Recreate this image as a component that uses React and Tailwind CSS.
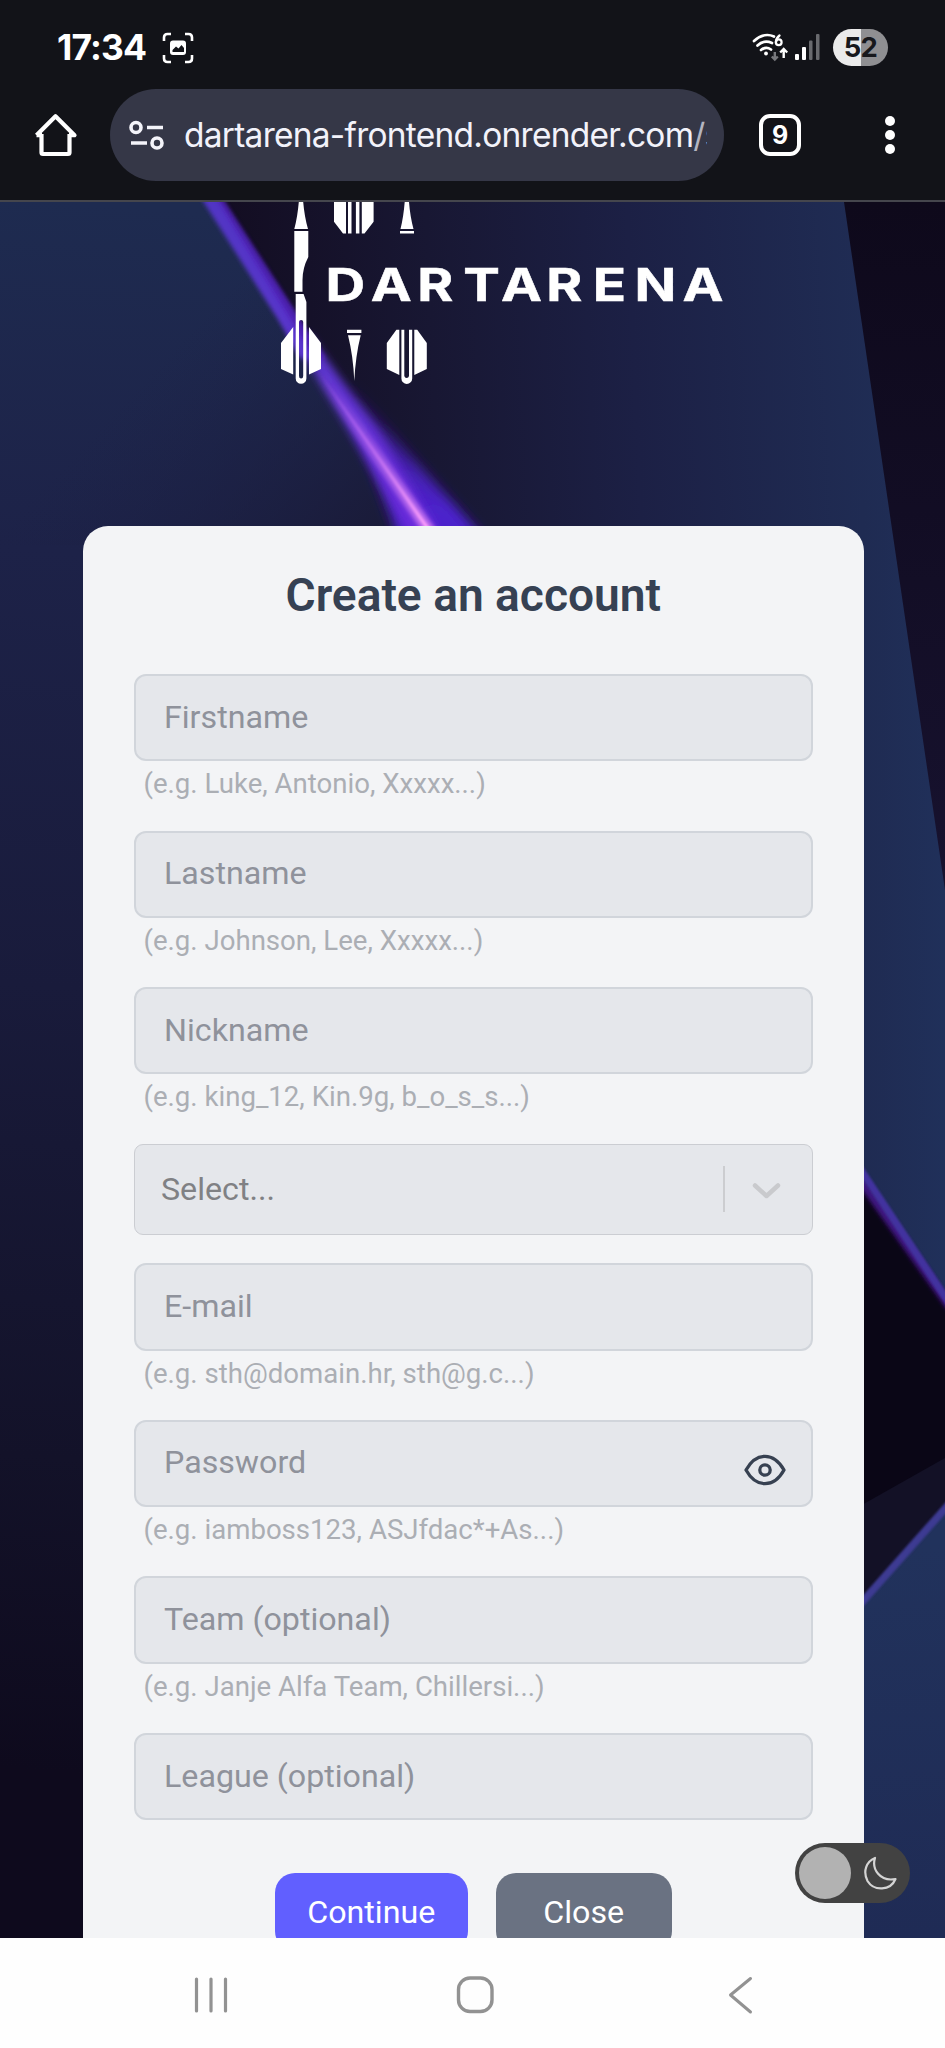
function StatusBar() {
  return (
    <div className="flex h-[89px] items-start pl-[57px] pr-[57px]">
      <span className="mt-[24px] font-['Inter'] text-[35.5px] leading-[48px] font-bold tracking-[-0.9px] text-white">17:34</span>
      <svg className="mt-[32px] ml-[16px]" width="32" height="32" viewBox="0 0 32 32" fill="none">
        <path d="M2 9V5.500Q2 2 5.500 2H9M23 2h3.500Q30 2 30 5.500V9M30 23v3.500Q30 30 26.500 30H23M9 30H5.500Q2 30 2 26.500V23" stroke="#fff" strokeWidth="2.600" />
        <rect x="8" y="8.500" width="16" height="14.500" rx="3" fill="#fff" />
        <path d="M10.500 20v-2l3.500-3.500 2.500 2 3-3.500 2.500 3V20z" fill="#121318" />
      </svg>
      <svg className="mt-[30px] ml-auto" width="38" height="34" viewBox="0 0 38 34" fill="none">
        <path d="M2 11Q12 2 22 6.500M5.500 15.500Q12 9.500 20 13M9 20Q14 16 19 19.500" stroke="#fff" strokeWidth="2.700" strokeLinecap="round" />
        <circle cx="14" cy="23.500" r="1.900" fill="#fff" />
        <path d="M27.500 5.500Q23.800 8.500 24 12.300" stroke="#fff" strokeWidth="2.300" strokeLinecap="round" />
        <circle cx="26.700" cy="12.300" r="2.900" stroke="#fff" strokeWidth="2.200" />
        <path d="M22.800 22v7M19.800 26.500l3 3 3-3" stroke="#77787c" strokeWidth="2.400" />
        <path d="M31.700 28v-9M28.200 22.500l3.500-3.500 3.500 3.500" stroke="#fff" strokeWidth="2.400" />
      </svg>
      <svg className="mt-[33px] ml-[5px]" width="26" height="28" viewBox="0 0 26 28">
        <rect x="0" y="21" width="4" height="6" rx="1" fill="#fff" />
        <rect x="7" y="14" width="4" height="13" rx="1" fill="#fff" />
        <rect x="14" y="7.500" width="3.500" height="19.500" rx="1" fill="#696a6e" />
        <rect x="21" y="1" width="3.500" height="26" rx="1" fill="#696a6e" />
      </svg>
      <div className="mt-[29px] ml-[12px] flex h-[37px] w-[55px] items-center justify-center rounded-full bg-linear-to-r from-[#ebebeb] from-[51%] to-[#8f8f92] to-[51%]">
        <span className="font-['Inter'] text-[27.5px] leading-none font-bold tracking-[-0.8px] text-[#17181c]">52</span>
      </div>
    </div>
  );
}

function Toolbar() {
  return (
    <div className="flex h-[111px] items-start">
      <svg className="mt-[23px] ml-[33px]" width="46" height="46" viewBox="0 0 46 46" fill="none" stroke="#fff" strokeWidth="4.200" strokeLinejoin="round">
        <path d="M8.500 22V40.500Q8.500 42 10 42H35Q36.500 42 36.500 40.500V22M3.500 23.200L22.500 4.200L41.500 23.200H36M9 23.200H3.500" />
      </svg>
      <div className="ml-[31px] flex h-[92px] w-[614px] items-center rounded-full bg-[#353747] pl-[18px]">
        <svg width="38" height="34" viewBox="0 0 38 34" fill="none" stroke="#f4f4fa" strokeWidth="3.600">
          <circle cx="8" cy="9.500" r="5" />
          <path d="M19 9.500h16M3 25h16" />
          <circle cx="29" cy="25" r="5" />
        </svg>
        <div className="ml-[18px] w-[523px] overflow-hidden font-['Inter'] text-[33.5px] leading-[46px] tracking-[-0.75px] whitespace-nowrap text-[#f2f2fa]">dartarena-frontend.onrender.com<span className="text-[#b4b5c0]">/s</span></div>
      </div>
      <div className="mt-[25px] ml-[35px] flex size-[42px] items-center justify-center rounded-[11px] border-[4.500px] border-white font-['Inter'] text-[25px] leading-none font-bold text-white">9</div>
      <div className="mt-[27px] ml-[84px] flex flex-col gap-[4px]">
        <i className="size-[10px] rounded-full bg-white" />
        <i className="size-[10px] rounded-full bg-white" />
        <i className="size-[10px] rounded-full bg-white" />
      </div>
    </div>
  );
}

function Backdrop() {
  return (
    <svg className="absolute inset-0" width="945" height="1736" viewBox="0 202 945 1736">
      <defs>
        <linearGradient id="left" gradientUnits="userSpaceOnUse" x1="60" y1="202" x2="-60" y2="1938">
          <stop offset="0" stopColor="#1e2b50" />
          <stop offset="0.200" stopColor="#1d2248" />
          <stop offset="0.450" stopColor="#191b3b" />
          <stop offset="0.720" stopColor="#131229" />
          <stop offset="0.900" stopColor="#0e0a1d" />
          <stop offset="1" stopColor="#0e0a1d" />
        </linearGradient>
        <linearGradient id="tint" gradientUnits="userSpaceOnUse" x1="180" y1="340" x2="380" y2="530">
          <stop offset="0" stopColor="#1c2146" stopOpacity="0" />
          <stop offset="1" stopColor="#1a1b39" />
        </linearGradient>
        <linearGradient id="mid" gradientUnits="userSpaceOnUse" x1="230" y1="330" x2="900" y2="300">
          <stop offset="0" stopColor="#130d22" />
          <stop offset="0.300" stopColor="#181733" />
          <stop offset="0.600" stopColor="#1c2045" />
          <stop offset="1" stopColor="#202e56" />
        </linearGradient>
        <linearGradient id="corner" gradientUnits="userSpaceOnUse" x1="0" y1="202" x2="0" y2="890">
          <stop offset="0" stopColor="#0e091b" />
          <stop offset="1" stopColor="#17122f" />
        </linearGradient>
        <linearGradient id="strip" gradientUnits="userSpaceOnUse" x1="864" y1="0" x2="945" y2="0">
          <stop offset="0" stopColor="#1f2b52" />
          <stop offset="1" stopColor="#20305a" />
        </linearGradient>
        <linearGradient id="low" gradientUnits="userSpaceOnUse" x1="880" y1="1550" x2="900" y2="1938">
          <stop offset="0" stopColor="#21325c" />
          <stop offset="1" stopColor="#1f2b55" />
        </linearGradient>
        <linearGradient id="beam" gradientUnits="userSpaceOnUse" x1="210" y1="202" x2="430" y2="526">
          <stop offset="0" stopColor="#5134c4" />
          <stop offset="0.500" stopColor="#5b35cc" />
          <stop offset="1" stopColor="#6a28dc" />
        </linearGradient>
        <linearGradient id="glow" gradientUnits="userSpaceOnUse" x1="340" y1="370" x2="430" y2="526">
          <stop offset="0" stopColor="#4a20b0" stopOpacity="0" />
          <stop offset="1" stopColor="#4c21cc" />
        </linearGradient>
        <linearGradient id="core" gradientUnits="userSpaceOnUse" x1="320" y1="370" x2="427" y2="526">
          <stop offset="0" stopColor="#a45cf0" stopOpacity="0" />
          <stop offset="0.500" stopColor="#b264ee" />
          <stop offset="1" stopColor="#fa9cfb" />
        </linearGradient>
        <filter id="b1" x="-20%" y="-20%" width="140%" height="140%"><feGaussianBlur stdDeviation="0.900" /></filter>
        <filter id="b2" x="-20%" y="-20%" width="140%" height="140%"><feGaussianBlur stdDeviation="2" /></filter>
        <filter id="b4" x="-20%" y="-20%" width="140%" height="140%"><feGaussianBlur stdDeviation="4" /></filter>
        <filter id="b8" x="-20%" y="-20%" width="140%" height="140%"><feGaussianBlur stdDeviation="7" /></filter>
      </defs>
      <rect x="0" y="202" width="945" height="1736" fill="url(#left)" />
      <path d="M0 202H210L440 545H0Z" fill="url(#tint)" />
      <path d="M210 202H945V560H449Z" fill="url(#mid)" />
      <path d="M340 385L500 560H412Z" fill="url(#glow)" filter="url(#b8)" />
      <path d="M342 375L484 545H404Z" fill="url(#glow)" filter="url(#b8)" />
      <path d="M196 190H216L325 360L300 358L277 318Z" fill="url(#beam)" filter="url(#b2)" />
      <path d="M290 332L310 336L378 430L455 560H424L345 424Z" fill="url(#beam)" filter="url(#b4)" />
      <path d="M212 190L222 198L325 358L316 360Z" fill="#4a17a8" opacity="0.700" filter="url(#b2)" />
      <path d="M318 371L440 546" stroke="url(#core)" strokeWidth="12" opacity="0.600" filter="url(#b2)" />
      <path d="M318 371L440 546" stroke="url(#core)" strokeWidth="3.500" filter="url(#b1)" />
      <path d="M860 500H945V1320H860Z" fill="url(#strip)" />
      <path d="M844 202H945V890Z" fill="url(#corner)" />
      <path d="M860 1180L945 1302V1520L860 1610Z" fill="#0a0616" />
      <path d="M860 1506L945 1458V1530L860 1620Z" fill="#131126" />
      <path d="M855 1173L950 1307" stroke="#401482" strokeWidth="8" filter="url(#b2)" />
      <path d="M855 1161L950 1304" stroke="#43339f" strokeWidth="7" filter="url(#b1)" />
      <path d="M855 1610L950 1503V1938H855Z" fill="url(#low)" />
      <path d="M855 1610L950 1503" stroke="#3c3b92" strokeWidth="7.500" filter="url(#b1)" />
    </svg>
  );
}

function Logo() {
  return (
    <svg className="block" width="460" height="190" viewBox="270 202 460 190" fill="#fff">
      <path d="M298.800 202h4.400Q304.500 217 308 229H294.300Q297.500 217 298.800 202Z" />
      <path d="M294.300 231H308.300V257Q302.500 268 302.500 280V291.700H294.300Z" />
      <path d="M295.700 294H303.600L306.400 302V378.500a5.350 5.350 0 0 1-10.700 0ZM299 322v54a2.100 2.500 0 0 0 4.200 0V322a2.100 2 0 0 0-4.200 0Z" fillRule="evenodd" />
      <path d="M293.200 327V374.500L281 369V343ZM309 327V374.500L321 369V343Z" />
      <path d="M334 202H346V233.500H343L334 221.700ZM373.600 202H361.800V233.500H364.500L373.600 221.700ZM348 202h3.500v31.500H348ZM355.900 202h3.500v31.500h-3.500Z" />
      <path d="M404.700 202h4.300Q410.200 217 413.500 229H400.500Q403.500 217 404.700 202ZM400 231h14v2.500h-14Z" />
      <path d="M347 329.700h14.400v3.200H347ZM348 335.300h12.700Q355.500 356 354.300 381Q353.200 356 348 335.300Z" />
      <path d="M396.400 329.700H399.300V375L386.800 369V343ZM417.200 329.700H414.300V375L426.800 369V343Z" />
      <path d="M401.400 329.700h2.900V376a2.400 2.500 0 0 0 4.700 0V329.700h3.200V378.500a5.400 5.400 0 0 1-10.800 0Z" />
      <text transform="scale(1.220 1)" x="266.900 304 342.100 379.700 410.600 447.800 485.900 520 559.400" y="301" fontFamily="Inter" fontWeight="700" fontSize="45" stroke="#fff" strokeWidth="0.500">DARTARENA</text>
    </svg>
  );
}

function Box({ label, children }) {
  return (
    <div className="flex h-[87.3px] items-center justify-between rounded-[12px] border-2 border-[#d1d5db] bg-[#e5e7eb] pr-[24px] pl-[28px] text-[32.2px] text-[#8f929b]">
      <span className="mb-[2px]">{label}</span>
      {children}
    </div>
  );
}

function Field({ label, hint, children }) {
  return (
    <div className="h-[156.6px]">
      <Box label={label}>{children}</Box>
      <p className="mt-[5px] pl-[9.500px] text-[27.6px] leading-[36px] text-[#abaeb4]">{hint}</p>
    </div>
  );
}

function EyeIcon() {
  return (
    <svg className="mt-[13px]" width="44" height="34" viewBox="0 0 44 34" fill="none" stroke="#374151" strokeWidth="3.300" strokeLinejoin="round">
      <path d="M3 17C8 8 14.500 3.300 22 3.300S36 8 41 17C36 26 29.500 30.700 22 30.700S8 26 3 17Z" />
      <circle cx="22" cy="17" r="5.200" />
    </svg>
  );
}

function SelectBox() {
  return (
    <div className="mb-[28.3px] flex h-[91.2px] items-center rounded-[9px] border-[1.500px] border-[#cbcdd2] bg-[#e5e7eb] pl-[26px] text-[32.2px] text-[#808184]">
      <span className="mb-[1px] grow">Select...</span>
      <i className="h-[46px] w-[2px] bg-[#cccdd0]" />
      <svg className="mt-[3px] mr-[31px] ml-[27px]" width="29" height="18" viewBox="0 0 29 18" fill="none" stroke="#c9cacd" strokeWidth="4.500" strokeLinecap="round" strokeLinejoin="round">
        <path d="M3 3.500L14.500 14L26 3.500" />
      </svg>
    </div>
  );
}

function Card() {
  return (
    <div className="ml-[83px] h-[1412px] w-[780.5px] overflow-hidden rounded-t-[25px] bg-[#f3f4f6] px-[51px] pt-[39px]">
      <h1 className="h-[109px] text-center text-[46.1px] leading-[60px] font-semibold text-[#364153]">Create an account</h1>
      <Field label="Firstname" hint="(e.g. Luke, Antonio, Xxxxx...)" />
      <Field label="Lastname" hint="(e.g. Johnson, Lee, Xxxxx...)" />
      <Field label="Nickname" hint="(e.g. king_12, Kin.9g, b_o_s_s...)" />
      <SelectBox />
      <Field label="E-mail" hint="(e.g. sth@domain.hr, sth@g.c...)" />
      <Field label="Password" hint="(e.g. iamboss123, ASJfdac*+As...)">
        <EyeIcon />
      </Field>
      <Field label="Team (optional)" hint="(e.g. Janje Alfa Team, Chillersi...)" />
      <Box label="League (optional)" />
      <div className="mt-[52.500px] flex justify-center gap-[28px] text-[32.2px] text-white">
        <button className="h-[78px] w-[193px] rounded-[20px] bg-[#615fff]">Continue</button>
        <button className="h-[78px] w-[176px] rounded-[20px] bg-[#6a7282]">Close</button>
      </div>
    </div>
  );
}

function ThemeToggle() {
  return (
    <div className="absolute right-[35px] bottom-[35px] flex h-[60px] w-[115px] items-center justify-between rounded-full bg-[#424242] pr-[13px] pl-[4px]">
      <i className="size-[51.500px] rounded-full bg-[#b2b2b2]" />
      <svg width="34" height="34" viewBox="0 0 34 34" fill="none" stroke="#d4d4d4" strokeWidth="2.200" strokeLinejoin="round">
        <path d="M12 2C8.500 13 17 26 32.500 23C27.500 35 11 35.500 4.500 25C-0.500 15 3.500 5.500 12 2Z" />
      </svg>
    </div>
  );
}

function NavBar() {
  return (
    <div className="flex h-[110px] items-start bg-[#fefefe] pt-[37px] pl-[193px]">
      <svg width="36" height="40" viewBox="0 0 36 40" stroke="#929292" strokeWidth="3.200" strokeLinecap="round">
        <path d="M3.500 4v32M18 4v32M32.500 4v32" />
      </svg>
      <svg className="ml-[226px]" width="41" height="40" viewBox="0 0 41 40" fill="none" stroke="#929292" strokeWidth="3.400">
        <rect x="3.500" y="3" width="33.500" height="33.500" rx="11.500" />
      </svg>
      <svg className="ml-[231px]" width="28" height="40" viewBox="0 0 28 40" fill="none" stroke="#929292" strokeWidth="3" strokeLinecap="round" strokeLinejoin="round">
        <path d="M23.500 3.500L3.500 20L23.500 37" />
      </svg>
    </div>
  );
}

export default function App() {
  return (
    <div className="flex h-[2048px] w-[945px] flex-col overflow-hidden bg-[#121318] font-['Roboto',sans-serif]">
      <header className="h-[202px] border-b-2 border-[#45464d]">
        <StatusBar />
        <Toolbar />
      </header>
      <main className="relative h-[1736px] overflow-hidden">
        <Backdrop />
        <div className="relative h-[324px] pl-[270px]">
          <Logo />
        </div>
        <div className="relative">
          <Card />
        </div>
        <ThemeToggle />
      </main>
      <NavBar />
    </div>
  );
}
